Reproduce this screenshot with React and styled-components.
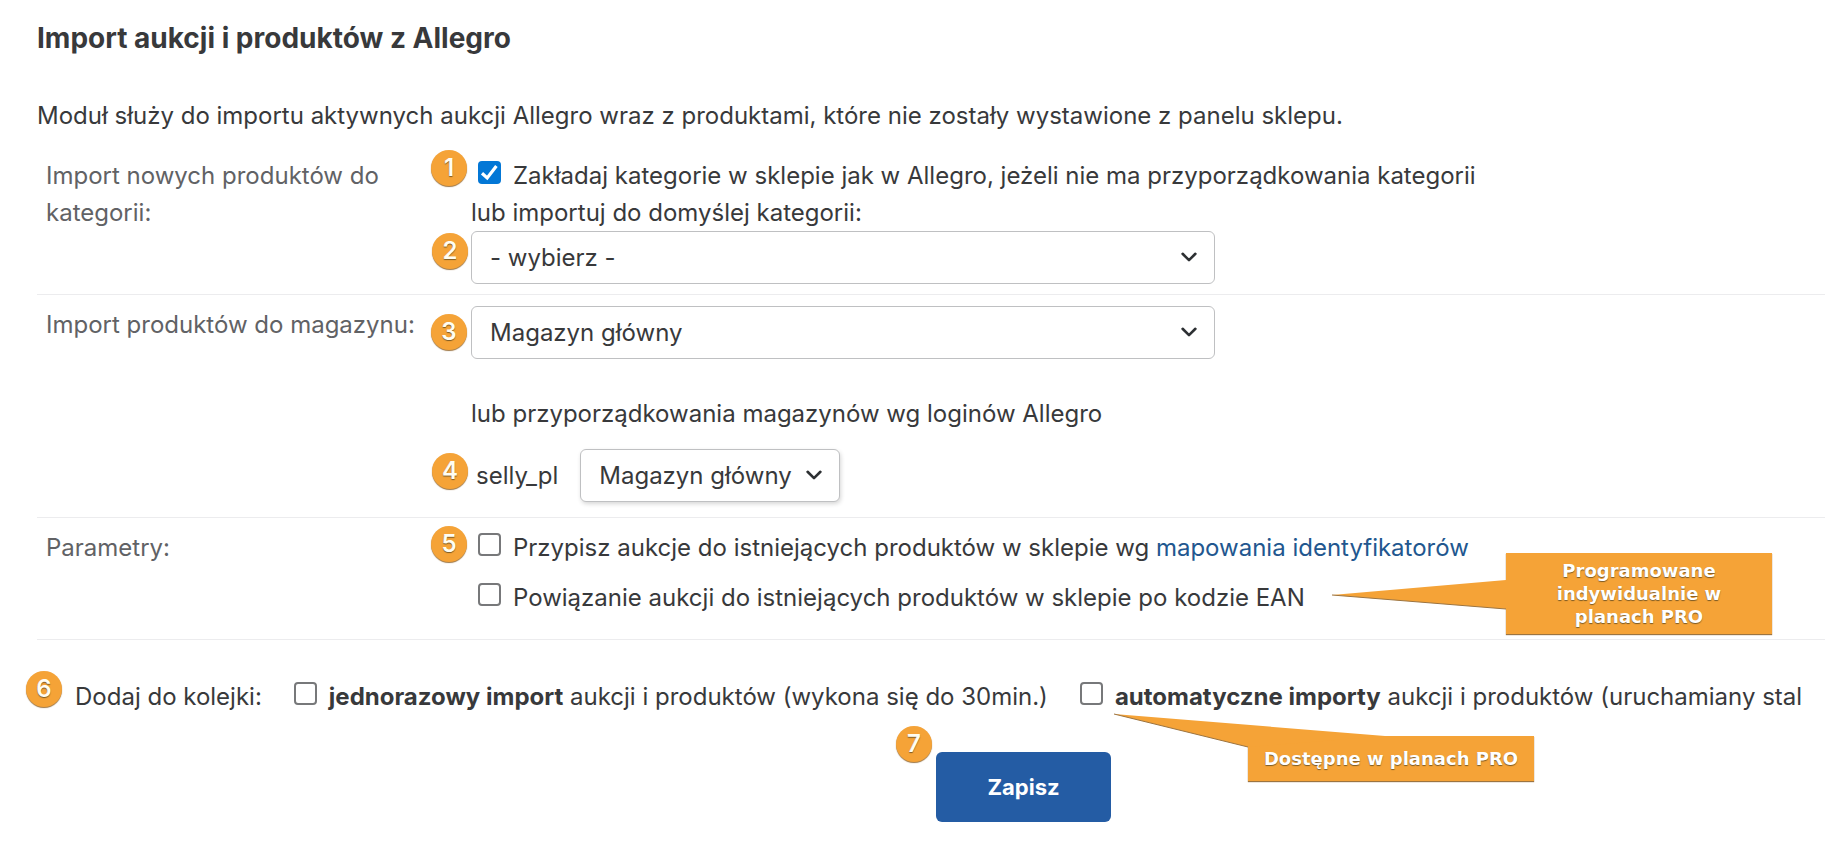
import { useState } from "react";
import styled, { createGlobalStyle } from "styled-components";

const colors = {
  text: "#38393b",
  label: "#616265",
  border: "#bfc0c2",
  line: "#ececee",
  blue: "#245ca4",
  link: "#22578f",
  check: "#0377d6",
  orange: "#f5a337",
  shade: "#9c7440"
}

const chevron = `url("data:image/svg+xml,%3Csvg xmlns='http://www.w3.org/2000/svg' viewBox='0 0 16 10' fill='none' stroke='%232d3033' stroke-width='2.6' stroke-linecap='round' stroke-linejoin='round'%3E%3Cpath d='M1.6 1.8 8 8.1l6.4-6.3'/%3E%3C/svg%3E")`;

const tick = `url("data:image/svg+xml,%3Csvg xmlns='http://www.w3.org/2000/svg' viewBox='0 0 23 23' fill='none' stroke='white' stroke-width='3.2'%3E%3Cpath d='M4 12.2 9.2 17 18.4 5'/%3E%3C/svg%3E")`;

const GlobalStyle = createGlobalStyle`
  * {
    box-sizing: border-box;
  }

  body {
    margin: 0;
    background: #fff;
    color: ${colors.text};
    font-family: Inter, "Liberation Sans", sans-serif;
    font-size: 24px;
    line-height: 37px;
  }
`

const Page = styled.form`
  padding: 18px 0 28px 37px;
  overflow: hidden;
`

const Title = styled.h1`
  margin: 0 0 39px;
  font-size: 28px;
  line-height: 40px;
  font-weight: 700;
`

const Intro = styled.p`
  margin: 0 0 12px;
`

const Row = styled.section`
  display: grid;
  grid-template-columns: 425px minmax(0, 1fr);
  padding: 11px 0 10px 9px;
  border-bottom: 1px solid ${colors.line};
`

const RowLabel = styled.div`
  color: ${colors.label};
  padding-right: 40px;
  white-space: ${props=>props.$nowrap ? "nowrap" : "normal"};
`

const Fields = styled.div`
  display: flex;
  flex-direction: column;
`

const Line = styled.div`
  position: relative;
  display: flex;
`

const Note = styled.p`
  margin: 36px 0 17px;
`

const LoginLine = styled(Line)`
  align-items: center;
  gap: 22px;
  padding-left: 5px;
  margin-bottom: 5px;
`

const Option = styled(Line)`
  height: 50px;
`

const Select = styled.select`
  appearance: none;
  width: ${props=>props.$small ? "260px" : "744px"};
  height: 53px;
  padding: 0 ${props=>props.$small ? "34px" : "42px"} 0 18px;
  border: 1px solid ${colors.border};
  border-radius: 6px;
  background: #fff ${chevron} no-repeat right 17px top 20px / 16px 10px;
  box-shadow: ${props=>props.$small ? "1px 2px 4px rgba(0,0,0,0.16)" : "none"};
  color: inherit;
  font: inherit;
`

const CheckLabel = styled.label`
  display: flex;
  align-items: flex-start;
  gap: 12px;
  white-space: nowrap;
  padding-left: ${props=>props.$flush ? "0" : "7px"};
`

const Checkbox = styled.input`
  appearance: none;
  flex: none;
  width: 23px;
  height: 23px;
  margin: 4px 0 0;
  border: 2px solid #77787a;
  border-radius: 4px;
  background: #fff;

  &:checked {
    border: 0;
    background: ${colors.check} ${tick} center / 23px 23px;
  }
`

const Link = styled.a`
  color: ${colors.link};
  text-decoration: none;
`

const Queue = styled(Line)`
  gap: 32px;
  margin-top: 38px;
  padding-left: 38px;
  white-space: nowrap;
`

const Footer = styled.div`
  display: flex;
  justify-content: center;
  margin-top: 37px;
  padding-left: 185px;
`

const SaveWrap = styled.div`
  position: relative;
`

const SaveButton = styled.button`
  width: 175px;
  height: 70px;
  border: 0;
  border-radius: 6px;
  background: ${colors.blue};
  color: #fff;
  font: inherit;
  font-size: 22px;
  font-weight: 700;
`

const Badge = styled.span`
  position: absolute;
  left: ${props=>props.$left}px;
  top: ${props=>props.$top}px;
  width: 36px;
  height: 36px;
  border-radius: 50%;
  background: ${colors.orange};
  box-shadow: 0 1px 1px ${colors.shade};
  color: #fffdf2;
  font-size: 24px;
  line-height: 36px;
  font-weight: 600;
  text-align: center;
  text-shadow: 0 1px 1px #7a5a26;
`

const Callout = styled.div`
  position: absolute;
  z-index: 1;
  left: ${props=>props.$left}px;
  top: ${props=>props.$top}px;
  width: ${props=>props.$width}px;
  padding: ${props=>props.$pad};
  background: ${colors.orange};
  box-shadow: 0 1px 1px ${colors.shade};
  color: #fff;
  font-family: "DejaVu Sans", sans-serif;
  font-size: 18px;
  line-height: 23px;
  font-weight: 700;
  text-align: center;
  text-shadow: 0 1px 1px #7a5a26;
`

const Pointer = styled.svg`
  position: absolute;
  z-index: -1;
  right: ${props=>props.$right};
  top: ${props=>props.$top}px;
  overflow: visible;
`

const App = () => {

  const [checked, setChecked] = useState({categories: true, mapping: false, ean: false, once: false, auto: false});

  const bind = (name) => ({
    type: "checkbox",
    name,
    checked: checked[name],
    onChange: (e) => setChecked({...checked, [name]: e.target.checked})
  })

  return (
    <>
      <GlobalStyle />
      <Page onSubmit={(e) => e.preventDefault()}>
        <Title>Import aukcji i produktów z Allegro</Title>
        <Intro>Moduł służy do importu aktywnych aukcji Allegro wraz z produktami, które nie zostały wystawione z panelu sklepu.</Intro>

        <Row>
          <RowLabel>Import nowych produktów do kategorii:</RowLabel>
          <Fields>
            <Line>
              <Badge $left={-40} $top={-7}>1</Badge>
              <CheckLabel>
                <Checkbox {...bind("categories")} />
                <span>Zakładaj kategorie w sklepie jak w Allegro, jeżeli nie ma przyporządkowania kategorii</span>
              </CheckLabel>
            </Line>
            <label htmlFor="category">lub importuj do domyślej kategorii:</label>
            <Line>
              <Badge $left={-39} $top={2}>2</Badge>
              <Select id="category">
                <option>- wybierz -</option>
              </Select>
            </Line>
          </Fields>
        </Row>

        <Row>
          <RowLabel as="label" htmlFor="warehouse" $nowrap>Import produktów do magazynu:</RowLabel>
          <Fields>
            <Line>
              <Badge $left={-40} $top={8}>3</Badge>
              <Select id="warehouse">
                <option>Magazyn główny</option>
              </Select>
            </Line>
            <Note>lub przyporządkowania magazynów wg loginów Allegro</Note>
            <LoginLine>
              <Badge $left={-39} $top={4}>4</Badge>
              <label htmlFor="login">selly_pl</label>
              <Select id="login" $small>
                <option>Magazyn główny</option>
              </Select>
            </LoginLine>
          </Fields>
        </Row>

        <Row>
          <RowLabel>Parametry:</RowLabel>
          <Fields>
            <Option>
              <Badge $left={-40} $top={-3}>5</Badge>
              <CheckLabel>
                <Checkbox {...bind("mapping")} />
                <span>Przypisz aukcje do istniejących produktów w sklepie wg <Link href="#mapowania">mapowania identyfikatorów</Link></span>
              </CheckLabel>
            </Option>
            <Option>
              <CheckLabel>
                <Checkbox {...bind("ean")} />
                <span>Powiązanie aukcji do istniejących produktów w sklepie po kodzie EAN</span>
              </CheckLabel>
              <Callout $left={1035} $top={-26} $width={266} $pad="6px 40px">
                <Pointer width="174" height="31" $right="100%" $top={26}>
                  <path d="M0 16 174 1V30Z" fill={colors.orange} />
                  <path d="M0 16 174 30" stroke={colors.shade} />
                </Pointer>
                Programowane indywidualnie w planach PRO
              </Callout>
            </Option>
          </Fields>
        </Row>

        <Queue>
          <Badge $left={-11} $top={-7}>6</Badge>
          <span>Dodaj do kolejki:</span>
          <CheckLabel $flush>
            <Checkbox {...bind("once")} />
            <span><b>jednorazowy import</b> aukcji i produktów (wykona się do 30min.)</span>
          </CheckLabel>
          <CheckLabel $flush>
            <Checkbox {...bind("auto")} />
            <span><b>automatyczne importy</b> aukcji i produktów (uruchamiany stal</span>
          </CheckLabel>
          <Callout $left={1211} $top={58} $width={286} $pad="11px 0">
            <Pointer width="271" height="33" $right="149px" $top={-22}>
              <path d="M0 0 271 22 134 33Z" fill={colors.orange} />
              <path d="M0 0 134 33" stroke={colors.shade} />
            </Pointer>
            Dostępne w planach PRO
          </Callout>
        </Queue>

        <Footer>
          <SaveWrap>
            <Badge $left={-40} $top={-26}>7</Badge>
            <SaveButton type="submit">Zapisz</SaveButton>
          </SaveWrap>
        </Footer>
      </Page>
    </>
  )
}

export default App;
